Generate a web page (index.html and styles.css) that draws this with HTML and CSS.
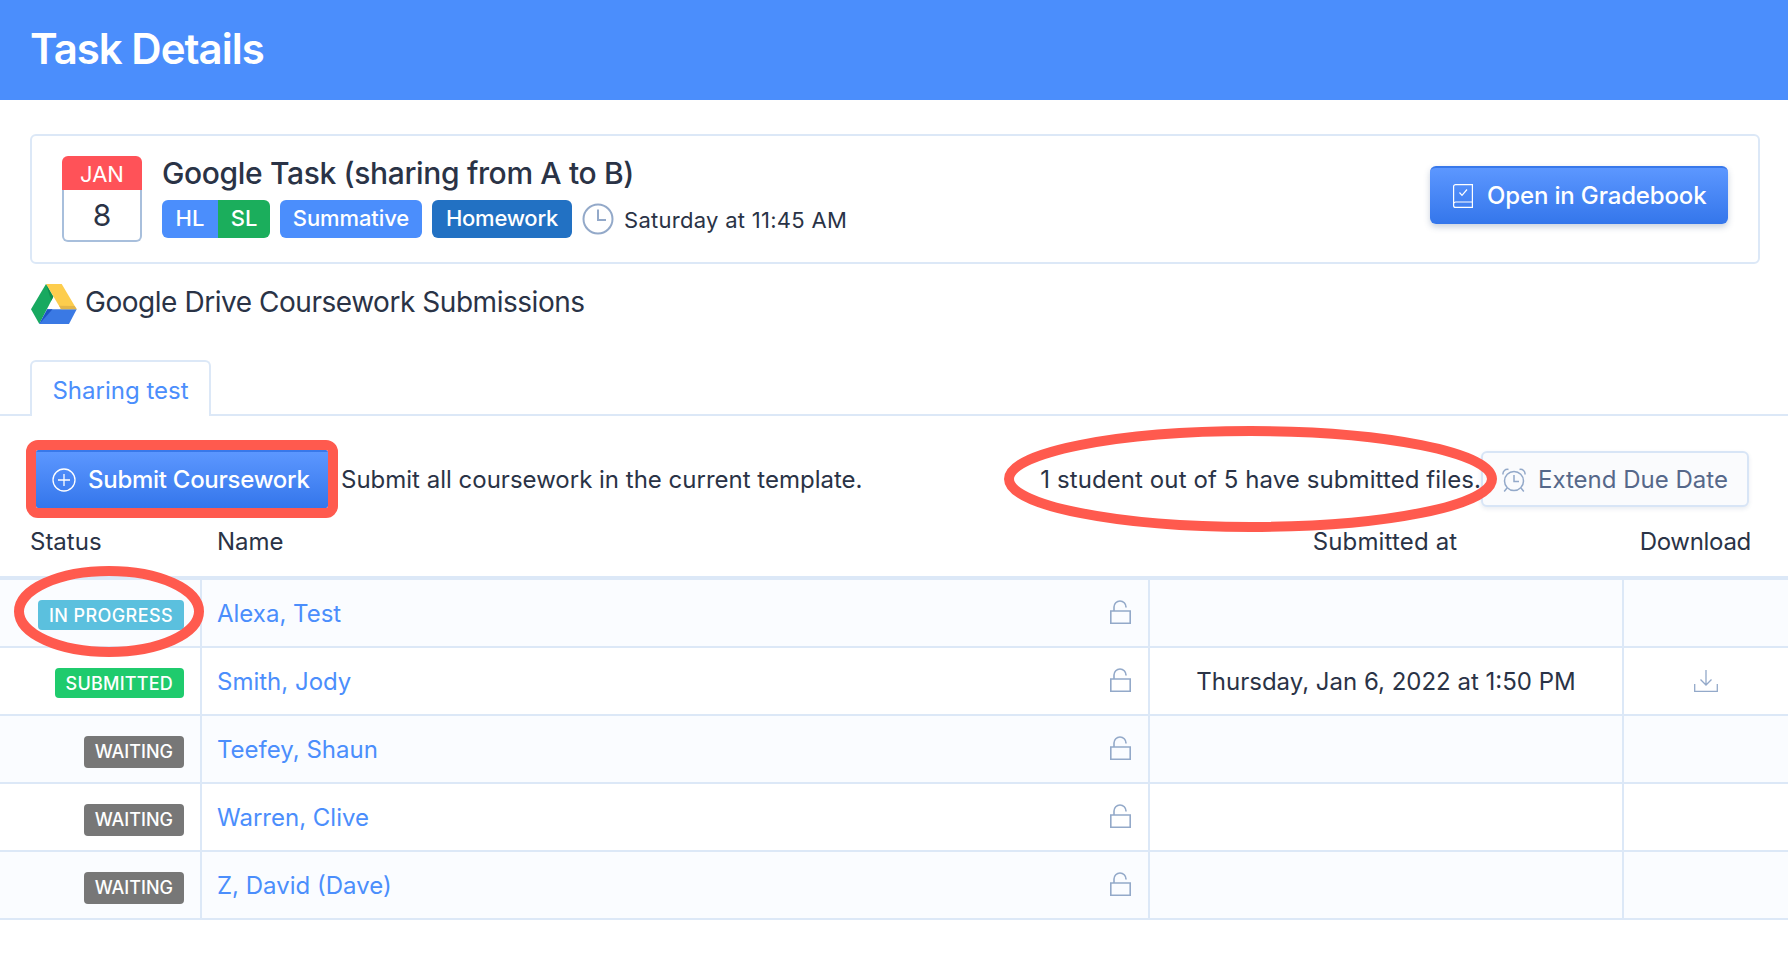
FILE: index.html
```html
<!DOCTYPE html>
<html lang="en">
<head>
<meta charset="utf-8">
<title>Task Details</title>
<link rel="stylesheet" href="styles.css">
</head>
<body>
<header class="topbar"><h1>Task Details</h1></header>
<main class="content">
  <section class="task-card">
    <div class="cal">
      <div class="cal-month">JAN</div>
      <div class="cal-day">8</div>
    </div>
    <div class="task-info">
      <div class="task-title">Google Task (sharing from A to B)</div>
      <div class="task-meta">
        <span class="pair"><span class="tag tag-blue">HL</span><span class="tag tag-green">SL</span></span>
        <span class="tag tag-blue tag-solo">Summative</span>
        <span class="tag tag-dark tag-solo tag-hw">Homework</span>
        <svg class="clock" viewBox="0 0 32 32" fill="none" stroke="#93a9c9" stroke-width="2"><circle cx="16" cy="16" r="14.5"/><path d="M16 6.500V17h8"/></svg>
        <span class="task-time">Saturday at 11:45 AM</span>
      </div>
    </div>
    <button class="btn btn-primary btn-book">
      <svg class="ico-book" viewBox="0 0 20 24" fill="none" stroke="#fff" stroke-width="1.200"><path d="M19.400.6H2.600a2 2 0 0 0-2 2v18.800a2 2 0 0 0 2 2h16.800zM.6 20a2 2 0 0 1 2-2h16.800"/><path d="M6.500 8.500l2.500 2.800 5-5.800"/></svg>
      <span>Open in Gradebook</span>
    </button>
  </section>

  <div class="drive-row">
    <svg class="drive" viewBox="0 0 46 40">
      <path fill="#18a960" d="M15 0l7.300 12.700L8.300 40 0 25.300z"/>
      <path fill="#fdcd4d" d="M15 0h15.700l15 25.300H30z"/>
      <path fill="#3a79e4" d="M16.300 25.300h29.400L38 40H8.300z"/>
      <path fill="#1c55c4" d="M16.300 25.300l5.200 0L8.300 40z"/>
      <path fill="#e3b64a" d="M30 25.300h15.700l-2-3.300-15.500-.2z"/>
      <path fill="#0f8f50" d="M15 0l7.300 12.700-2 4z"/>
    </svg>
    <span class="drive-title">Google Drive Coursework Submissions</span>
  </div>

  <nav class="tabs"><a class="tab">Sharing test</a></nav>

  <div class="toolbar">
    <button class="btn btn-primary btn-submit">
      <svg class="ico-plus" viewBox="0 0 24 24" fill="none" stroke="#fff" stroke-width="1.300"><circle cx="12" cy="12" r="11"/><path d="M12 6v12M6 12h12"/></svg>
      <span>Submit Coursework</span>
    </button>
    <span class="hint">Submit all coursework in the current template.</span>
    <span class="count">1 student out of 5 have submitted files.</span>
    <button class="btn btn-light">
      <svg class="ico-alarm" viewBox="0 0 24 24" fill="none" stroke="#93a9c9" stroke-width="1.500"><circle cx="12" cy="13" r="9.500"/><path d="M12 7v6.500h5M1 6.500A4.500 4.500 0 0 1 6.500 1.500M23 6.500A4.500 4.500 0 0 0 17.500 1.500M5 20l-2.800 3.500M19 20l2.800 3.500"/></svg>
      <span>Extend Due Date</span>
    </button>
  </div>

  <div class="table">
    <div class="row row-head">
      <div class="c-status">Status</div>
      <div class="c-name">Name</div>
      <div class="c-date">Submitted at</div>
      <div class="c-dl">Download</div>
    </div>
    <div class="row">
      <div class="c-status"><span class="badge b-info">IN PROGRESS</span></div>
      <div class="c-name"><a>Alexa, Test</a><svg class="ico-lock" viewBox="0 0 21 24"><use href="#lock"/></svg></div>
      <div class="c-date"></div><div class="c-dl"></div>
    </div>
    <div class="row">
      <div class="c-status"><span class="badge b-ok">SUBMITTED</span></div>
      <div class="c-name"><a>Smith, Jody</a><svg class="ico-lock" viewBox="0 0 21 24"><use href="#lock"/></svg></div>
      <div class="c-date"><span class="when">Thursday, Jan 6, 2022 at 1:50 PM</span></div>
      <div class="c-dl"><svg class="ico-dl" viewBox="0 0 24 22" fill="none" stroke="#93a9c9" stroke-width="1.300"><path d="M12 0v15M6.500 9.500L12 15l5.500-5.500M.7 14v7.300h22.600V14"/></svg></div>
    </div>
    <div class="row">
      <div class="c-status"><span class="badge b-wait">WAITING</span></div>
      <div class="c-name"><a>Teefey, Shaun</a><svg class="ico-lock" viewBox="0 0 21 24"><use href="#lock"/></svg></div>
      <div class="c-date"></div><div class="c-dl"></div>
    </div>
    <div class="row">
      <div class="c-status"><span class="badge b-wait">WAITING</span></div>
      <div class="c-name"><a>Warren, Clive</a><svg class="ico-lock" viewBox="0 0 21 24"><use href="#lock"/></svg></div>
      <div class="c-date"></div><div class="c-dl"></div>
    </div>
    <div class="row">
      <div class="c-status"><span class="badge b-wait">WAITING</span></div>
      <div class="c-name"><a>Z, David (Dave)</a><svg class="ico-lock" viewBox="0 0 21 24"><use href="#lock"/></svg></div>
      <div class="c-date"></div><div class="c-dl"></div>
    </div>
  </div>
</main>

<svg class="defs" width="0" height="0"><symbol id="lock" viewBox="0 0 21 24"><path fill="none" stroke="#93a9c9" stroke-width="1.600" d="M.8 11h19.400v12.200H.8zM4 11V7a6 6 0 0 1 12 0v.5"/></symbol></svg>

<svg class="mark mark-count" viewBox="0 0 493 106" fill="none" stroke="#ff5a4e" stroke-width="10"><ellipse cx="246.500" cy="53" rx="241.500" ry="48"/></svg>
<svg class="mark mark-status" viewBox="0 0 190 91" fill="none" stroke="#ff5a4e" stroke-width="10"><ellipse cx="95" cy="45.500" rx="90" ry="40.500"/></svg>
</body>
</html>
```

FILE: styles.css
```css
* { box-sizing: border-box; }
html, body { margin: 0; padding: 0; }
body {
  position: relative;
  height: 954px;
  overflow: hidden;
  background: #fff;
  color: #2a3346;
  font-family: Inter, "Liberation Sans", sans-serif;
  font-size: 24px;
  line-height: 32px;
}
.topbar {
  height: 100px;
  background: #4b8efc;
  display: flex;
  align-items: center;
  padding: 0 30px 2px;
}
.topbar h1 { margin: 0; color: #fff; font-size: 42px; font-weight: 600; line-height: 1; letter-spacing: -1px; }
.content { padding-top: 34px; }

.task-card {
  margin: 0 28px 0 30px;
  height: 130px;
  border: 2px solid #dce8f7;
  border-radius: 6px;
  display: flex;
  align-items: center;
  padding: 0 30px;
}
.cal {
  width: 80px;
  height: 86px;
  margin-right: 20px;
  flex: none;
  display: flex;
  flex-direction: column;
}
.cal-month {
  height: 34px;
  background: #ff5258;
  border-radius: 6px 6px 0 0;
  color: #fff;
  font-size: 22px;
  line-height: 36px;
  text-align: center;
}
.cal-day {
  flex: 1;
  border: 2px solid #a8bfdc;
  border-top: 0;
  border-radius: 0 0 6px 6px;
  text-align: center;
  font-size: 30px;
  line-height: 50px;
}
.task-info { flex: 1; margin-top: -7px; }
.task-title { font-size: 30px; line-height: 40px; font-weight: 500; letter-spacing: -0.35px; }
.task-meta { display: flex; align-items: center; margin-top: 7px; }
.pair { display: flex; margin-right: 10px; }
.pair .tag:first-child { border-radius: 6px 0 0 6px; width: 56px; }
.pair .tag:last-child { border-radius: 0 6px 6px 0; width: 52px; }
.tag {
  height: 38px;
  line-height: 37px;
  color: #fff;
  text-align: center;
  font-size: 22px;
  font-weight: 500;
}
.tag-blue { background: #4b8efc; }
.tag-green { background: #1bae5c; }
.tag-dark { background: #2271c3; }
.tag-solo { width: 142px; border-radius: 6px; margin-right: 10px; letter-spacing: -0.1px; }
.tag-hw { width: 140px; letter-spacing: -0.25px; }
.clock { width: 32px; height: 32px; margin-right: 10px; flex: none; }
.task-time { font-size: 22px; padding-top: 1px; letter-spacing: 0.28px; }

.btn {
  font: inherit;
  display: flex;
  align-items: center;
  border-radius: 6px;
  cursor: pointer;
  white-space: nowrap;
}
.btn-primary {
  color: #fff;
  font-weight: 500;
  background: linear-gradient(#5c97ff, #3476eb);
  border: 0;
  border-top: 2px solid #3878ea;
  box-shadow: 0 3px 6px rgba(40, 70, 120, .25);
}
.btn-book { width: 298px; height: 58px; padding: 0 0 0 23px; flex: none; margin-top: -8px; letter-spacing: -0.15px; }
.ico-book { width: 20px; height: 24px; margin-right: 14px; flex: none; }

.drive-row { display: flex; align-items: center; margin: 20px 0 0 31px; height: 40px; }
.drive { width: 46px; height: 40px; margin-right: 8px; flex: none; }
.drive-title { font-size: 28px; font-weight: 400; letter-spacing: -0.46px; margin-top: -4px; }

.tabs { margin-top: 36px; height: 56px; border-bottom: 2px solid #dce8f7; padding-left: 30px; }
.tab {
  display: block;
  width: 181px;
  height: 56px;
  border: 2px solid #dce8f7;
  border-bottom: 0;
  border-radius: 6px 6px 0 0;
  background: #fff;
  color: #4b8efc;
  text-align: center;
  line-height: 58px;
}

.toolbar { display: flex; align-items: center; height: 58px; margin: 34px 39px 0 36px; }
.btn-submit {
  width: 292px;
  height: 58px;
  padding: 0 0 0 16px;
  flex: none;
  border-radius: 2px;
  outline: 10px solid #ff5a4e;
  box-shadow: none;
  letter-spacing: -0.27px;
}
.ico-plus { width: 24px; height: 24px; margin-right: 12px; flex: none; }
.hint { margin-left: 13px; flex: 1; padding-top: 2px; }
.count { padding-top: 2px; letter-spacing: 0.09px; }
.btn-light {
  width: 268px;
  height: 56px;
  padding: 2px 0 0 19px;
  color: #56688a;
  background: #fafbfd;
  border: 2px solid #d8e5f6;
  box-shadow: 0 2px 4px rgba(40, 70, 120, .1);
  flex: none;
}
.ico-alarm { width: 24px; height: 24px; margin-right: 12px; flex: none; }

.table { margin-top: 18px; }
.row {
  display: grid;
  grid-template-columns: 200px 948px 474px 1fr;
  height: 68px;
  border-bottom: 2px solid #dce8f7;
}
.row:nth-child(even) { background: #fafcff; }
.row-head { height: 54px; border-bottom: 4px solid #dce8f7; background: #fff; }
.row > div { display: flex; align-items: center; }
.row > div + div { border-left: 2px solid #dce8f7; }
.row-head > div { align-items: flex-start; }
.row-head > div + div { border-left: 0; }
.c-status { justify-content: flex-end; padding-right: 16px; }
.row-head .c-status { justify-content: flex-start; padding: 0 0 0 30px; }
.c-name { padding: 0 17px 0 15px; justify-content: space-between; }
.row-head .c-name { padding-left: 17px; }
.c-name a { color: #4b8efc; padding-top: 2px; }
.c-date { justify-content: center; }
.row-head .c-date { letter-spacing: 0.15px; }
.when { padding-top: 2px; }
.c-dl { justify-content: center; }
.row-head .c-dl { justify-content: flex-end; padding-right: 37px; letter-spacing: -0.3px; }
.badge {
  display: block;
  margin-top: 4px;
  border-radius: 4px;
  color: #fff;
  font-size: 18px;
  line-height: 32px;
  height: 30px;
  padding: 0 11px;
  font-weight: 500;
}
.b-info { background: #5bc0de; letter-spacing: 0.4px; }
.b-ok { background: #1fcb6d; letter-spacing: 0.22px; }
.b-wait { background: #777; height: 32px; margin-top: 6px; }
.ico-lock { width: 21px; height: 24px; flex: none; margin-top: -2px; }
.ico-dl { width: 24px; height: 22px; }

.defs { position: absolute; }
.mark { position: absolute; pointer-events: none; }
.mark-count { left: 1004px; top: 426px; width: 493px; height: 106px; }
.mark-status { left: 14px; top: 566px; width: 190px; height: 91px; }
```
